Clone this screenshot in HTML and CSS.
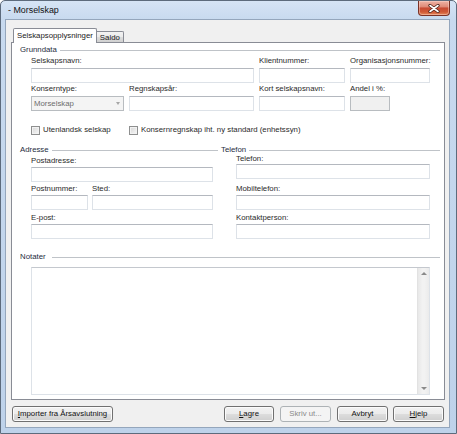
FILE: index.html
```html
<!DOCTYPE html>
<html lang="no">
<head>
<meta charset="utf-8">
<title>Morselskap</title>
<link rel="stylesheet" href="styles.css">
</head>
<body>
<div class="window">
  <div class="titlebar">
    <span class="title">- Morselskap</span>
    <div class="close">
      <svg width="12" height="9" viewBox="0 0 12 9">
        <path d="M2 1.5 L10 7.5 M10 1.5 L2 7.5" stroke="#4a2018" stroke-width="3.2" stroke-linecap="round" fill="none"/>
        <path d="M2 1.5 L10 7.5 M10 1.5 L2 7.5" stroke="#ffffff" stroke-width="1.6" stroke-linecap="round" fill="none"/>
      </svg>
    </div>
  </div>
  <div class="client">
    <div class="tabs">
      <div class="tab active">Selskapsopplysninger</div>
      <div class="tab">Saldo</div>
    </div>
    <div class="panel">
      <div class="group-head first"><span>Grunndata</span><i class="rule"></i></div>
      <div class="grid-main">
        <div class="field span2"><div class="lbl">Selskapsnavn:</div><div class="input"></div></div>
        <div class="field"><div class="lbl">Klientnummer:</div><div class="input"></div></div>
        <div class="field"><div class="lbl">Organisasjonsnummer:</div><div class="input"></div></div>
        <div class="field"><div class="lbl">Konserntype:</div><div class="combo"><span>Morselskap</span><i class="drop"></i></div></div>
        <div class="field"><div class="lbl">Regnskapsår:</div><div class="input"></div></div>
        <div class="field"><div class="lbl">Kort selskapsnavn:</div><div class="input"></div></div>
        <div class="field"><div class="lbl">Andel i %:</div><div class="input disabled narrow"></div></div>
        <div class="check"><span class="box"></span><span>Utenlandsk selskap</span></div>
        <div class="check span3"><span class="box"></span><span>Konsernregnskap iht. ny standard (enhetssyn)</span></div>
      </div>
      <div class="two-col">
        <div class="group">
          <div class="group-head"><span>Adresse</span><i class="rule"></i></div>
          <div class="fields left">
            <div class="field f1"><div class="lbl">Postadresse:</div><div class="input"></div></div>
            <div class="row f2">
              <div class="field postnr"><div class="lbl">Postnummer:</div><div class="input"></div></div>
              <div class="field sted"><div class="lbl">Sted:</div><div class="input"></div></div>
            </div>
            <div class="field f3"><div class="lbl">E-post:</div><div class="input"></div></div>
          </div>
        </div>
        <div class="group">
          <div class="group-head"><span>Telefon</span><i class="rule"></i></div>
          <div class="fields right">
            <div class="field r1"><div class="lbl">Telefon:</div><div class="input"></div></div>
            <div class="field r2"><div class="lbl">Mobiltelefon:</div><div class="input"></div></div>
            <div class="field r3"><div class="lbl">Kontaktperson:</div><div class="input"></div></div>
          </div>
        </div>
      </div>
      <div class="group-head notes-head"><span>Notater</span><i class="rule"></i></div>
      <div class="notes">
        <div class="notes-body"></div>
        <div class="vscroll">
          <div class="sbtn"><i class="up"></i></div>
          <div class="strack"></div>
          <div class="sbtn"><i class="down"></i></div>
        </div>
      </div>
    </div>
    <div class="buttons">
      <div class="btn import"><u>I</u>mporter fra Årsavslutning</div>
      <div class="right-btns">
        <div class="btn w50"><u>L</u>agre</div>
        <div class="btn disabled">Skriv ut...</div>
        <div class="btn">Avbryt</div>
        <div class="btn last"><u>H</u>jelp</div>
      </div>
    </div>
  </div>
</div>
</body>
</html>
```

FILE: styles.css
```css
html, body {
  margin: 0;
  padding: 0;
  background: #ffffff;
}
body {
  font-family: "Liberation Sans", Arial, sans-serif;
  font-size: 7.8px;
  color: #262626;
}
.window {
  width: 457px;
  height: 434px;
  box-sizing: border-box;
  border: 1px solid #5d6b7c;
  border-radius: 5px 5px 0 0;
  background: linear-gradient(to bottom, #d6e4f5 0, #c8daef 18px, #bed2ea 100%);
  display: flex;
  flex-direction: column;
  overflow: hidden;
}
.titlebar {
  height: 18px;
  flex: none;
  display: flex;
  align-items: center;
  padding-left: 7px;
}
.title {
  font-size: 8.9px;
  color: #111;
}
.close {
  margin-left: auto;
  margin-right: 6px;
  align-self: flex-start;
  width: 32px;
  height: 15px;
  box-sizing: border-box;
  border: 1px solid #7a3226;
  border-top: none;
  border-radius: 0 0 4px 4px;
  background: linear-gradient(to bottom, #eeb3a5 0%, #df8a77 42%, #c84a33 50%, #cf5a36 78%, #e5895c 100%);
  box-shadow: inset 0 0 0 1px rgba(255,220,210,0.45);
  display: flex;
  align-items: center;
  justify-content: center;
}
.client {
  flex: 1;
  margin: 0 6px 5px 4px;
  border: 1px solid #94a6bc;
  background: #f0f0f0;
  padding: 8px 4px 5px 5px;
  display: flex;
  flex-direction: column;
}
.tabs {
  display: flex;
  align-items: flex-end;
  height: 15px;
  margin-bottom: -1px;
  padding-left: 2px;
}
.tab {
  box-sizing: border-box;
  padding: 0 3px;
  border: 1px solid #898c95;
  border-bottom: none;
  white-space: nowrap;
  color: #1a1a1a;
}
.tab.active {
  height: 15px;
  line-height: 14px;
  background: #ffffff;
  border-radius: 2px 2px 0 0;
  position: relative;
  z-index: 1;
}
.tab:not(.active) {
  height: 11px;
  line-height: 11px;
  margin-bottom: 1px;
  border-left: none;
  border-radius: 0 2px 0 0;
  background: linear-gradient(to bottom, #f3f3f3 0%, #ebebeb 50%, #dddddd 50%, #d1d1d1 100%);
}
.panel {
  flex: none;
  height: 358px;
  box-sizing: border-box;
  border: 1px solid #898c95;
  background: #ffffff;
  padding: 0 4px 0 8px;
}
.group-head {
  display: flex;
  align-items: center;
  height: 10px;
  line-height: 10px;
  color: #1e2c40;
}
.group-head.first {
  margin-top: 2px;
}
.rule {
  flex: 1;
  height: 1px;
  background: #bfc3c8;
  margin-left: 3px;
}
.notes-head .rule {
  margin-left: 6px;
}
.lbl {
  height: 10px;
  line-height: 10px;
  white-space: nowrap;
  color: #2a2a2a;
}
.input {
  height: 15px;
  box-sizing: border-box;
  background: #ffffff;
  border: 1px solid #dde2e8;
  border-top-color: #b4b8bf;
}
.input.disabled {
  background: #f0f0f0;
  border-color: #b8bcc0;
}
.input.narrow {
  width: 40px;
}
.grid-main {
  margin-left: 11px;
  margin-top: 1px;
  display: grid;
  grid-template-columns: 93px 125px 86px 80px;
  column-gap: 5px;
  row-gap: 1px;
}
.grid-main .lbl {
  margin-bottom: 2px;
}
.span2 {
  grid-column: span 2;
}
.span3 {
  grid-column: span 3;
}
.combo {
  height: 15px;
  box-sizing: border-box;
  border: 1px solid #b8bcc0;
  background: #f4f4f4;
  color: #6d6d6d;
  display: flex;
  align-items: center;
  padding: 0 3px 0 2px;
}
.combo span {
  flex: 1;
}
.drop {
  width: 0;
  height: 0;
  border-left: 2.5px solid transparent;
  border-right: 2.5px solid transparent;
  border-top: 3px solid #a6a6a6;
}
.check {
  margin-top: 13px;
  height: 10px;
  line-height: 10px;
  display: flex;
  align-items: center;
  white-space: nowrap;
  color: #2a2a2a;
}
.box {
  width: 9px;
  height: 9px;
  box-sizing: border-box;
  border: 1px solid #8e8f8f;
  background: linear-gradient(135deg, #d6d6d6, #f8f8f8);
  box-shadow: inset 0 0 0 1px #f2f2f2;
  margin-right: 3px;
  flex: none;
}
.two-col {
  margin-top: 10px;
  display: grid;
  grid-template-columns: 198px 1fr;
  column-gap: 3px;
}
.fields.left {
  margin-left: 11px;
  width: 182px;
}
.fields.right {
  margin-left: 15px;
  margin-right: 10px;
}
.fields .lbl {
  margin-bottom: 1px;
}
.f1 { margin-top: 1px; }
.f2 { margin-top: 2px; }
.f3 { margin-top: 3px; }
.row {
  display: flex;
  column-gap: 4px;
}
.postnr { width: 57px; }
.sted { flex: 1; }
.r1 { margin-top: -1px; }
.r1 .lbl { margin-bottom: 0; }
.r2 { margin-top: 5px; }
.r3 { margin-top: 3px; }
.notes-head {
  margin-top: 13px;
}
.notes {
  margin: 5px 0 0 11px;
  width: 399px;
  height: 128px;
  box-sizing: border-box;
  border: 1px solid #dde2e8;
  border-top-color: #c4c8ce;
  display: flex;
  background: #ffffff;
}
.notes-body {
  flex: 1;
}
.vscroll {
  width: 11px;
  display: flex;
  flex-direction: column;
  background: linear-gradient(to right, #e8e8e8, #f2f2f2 40%, #f2f2f2 60%, #ebebeb);
  border-left: 1px solid #e2e2e2;
}
.sbtn {
  height: 11px;
  display: flex;
  align-items: center;
  justify-content: center;
}
.strack {
  flex: 1;
}
.up, .down {
  width: 0;
  height: 0;
  border-left: 3px solid transparent;
  border-right: 3px solid transparent;
}
.up { border-bottom: 3px solid #8a8a8a; }
.down { border-top: 3px solid #8a8a8a; }
.buttons {
  margin-top: 6px;
  height: 16px;
  display: flex;
}
.btn {
  height: 16px;
  box-sizing: border-box;
  width: 51px;
  border: 1px solid #707070;
  border-radius: 3px;
  background: linear-gradient(to bottom, #f2f2f2 0%, #ebebeb 50%, #dddddd 50%, #cfcfcf 100%);
  box-shadow: inset 0 0 0 1px #fbfbfb;
  line-height: 14px;
  text-align: center;
  color: #111;
  white-space: nowrap;
}
.btn.import {
  width: 101px;
  margin-left: 1px;
}
.btn.w50 {
  width: 50px;
}
.btn.disabled {
  border-color: #adb2b5;
  background: #f4f4f4;
  box-shadow: none;
  color: #8a8a8a;
}
.right-btns {
  margin-left: auto;
  margin-right: 1px;
  display: flex;
  column-gap: 6px;
}
.btn.last {
  margin-left: -1px;
}
```
